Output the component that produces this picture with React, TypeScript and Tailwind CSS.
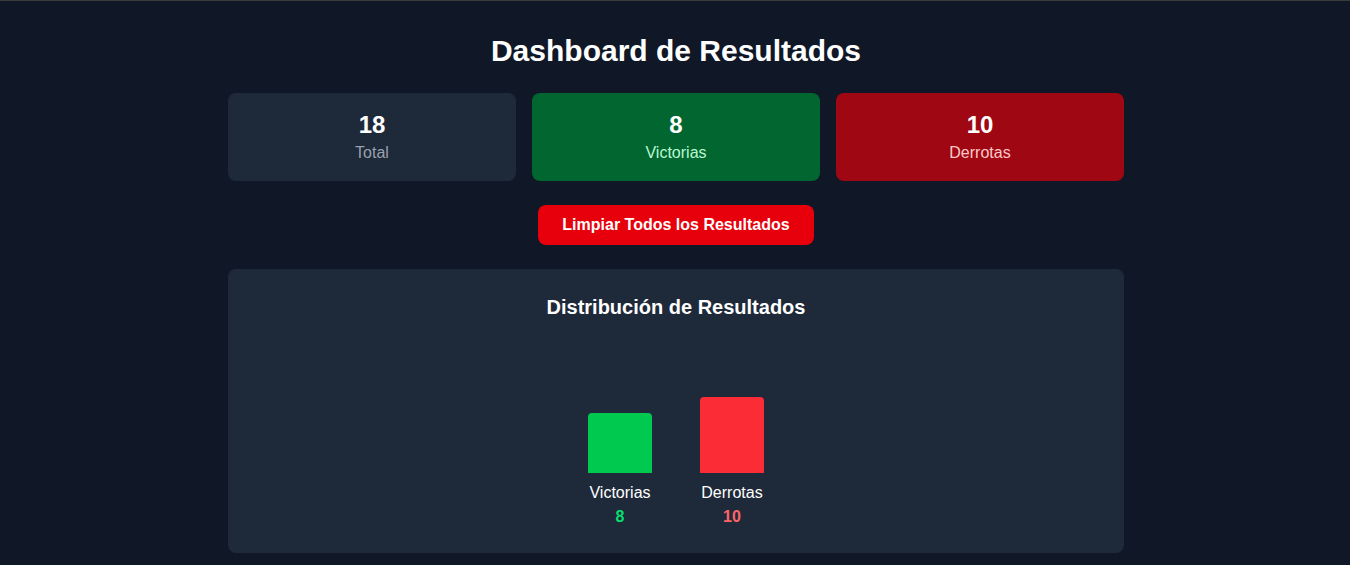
import React from "react";

export default function App() {
  const victorias = 8;
  const derrotas = 10;
  const total = victorias + derrotas;
  const vh = Math.round((victorias / total) * 136);
  const dh = Math.round((derrotas / total) * 136);
  return (
    <div
      className="min-h-[565px] bg-[#101828] border-t border-[#3a3a3a] pt-8 pb-8 pl-[34px] pr-8 text-white"
      style={{ fontFamily: '"Liberation Sans", Arial, sans-serif' }}
    >
      <div className="max-w-4xl mx-auto">
        <h1 className="text-3xl font-bold text-center mb-6">Dashboard de Resultados</h1>
        <div className="grid grid-cols-3 gap-4 mb-6">
          <div className="bg-[#1e2939] rounded-lg p-4 text-center">
            <div className="text-2xl font-bold">{total}</div>
            <div className="text-[#99a1af]">Total</div>
          </div>
          <div className="bg-[#016630] rounded-lg p-4 text-center">
            <div className="text-2xl font-bold">{victorias}</div>
            <div className="text-[#b9f8cf]">Victorias</div>
          </div>
          <div className="bg-[#9f0712] rounded-lg p-4 text-center">
            <div className="text-2xl font-bold">{derrotas}</div>
            <div className="text-[#ffc9c9]">Derrotas</div>
          </div>
        </div>
        <div className="flex justify-center mb-6">
          <button className="bg-[#e7000b] text-white font-bold px-6 py-2 rounded-lg">
            Limpiar Todos los Resultados
          </button>
        </div>
        <div className="bg-[#1e2939] rounded-lg p-6">
          <h2 className="text-xl font-bold text-center mb-4">Distribución de Resultados</h2>
          <div className="h-48 flex items-end justify-center gap-12">
            <div className="flex flex-col items-center w-16">
              <div className="w-16 bg-[#00c950] rounded-t" style={{ height: vh }} />
              <div className="mt-2">Victorias</div>
              <div className="font-bold text-[#05df72]">{victorias}</div>
            </div>
            <div className="flex flex-col items-center w-16">
              <div className="w-16 bg-[#fb2c36] rounded-t" style={{ height: dh }} />
              <div className="mt-2">Derrotas</div>
              <div className="font-bold text-[#ff6467]">{derrotas}</div>
            </div>
          </div>
        </div>
      </div>
    </div>
  );
}
